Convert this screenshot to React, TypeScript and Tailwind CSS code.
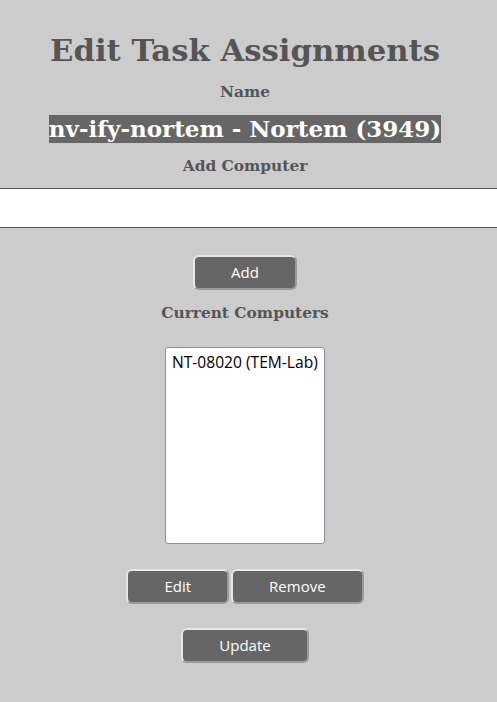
const serif = "font-['DejaVu_Serif',serif]"
const sans = "font-['Open_Sans','Noto_Sans',sans-serif]"

function GrayButton({ label }: { label: string }) {
  return (
    <button
      className={`${sans} h-[35px] px-[36px] rounded-[6px] bg-[#666666] text-white text-[15px] border-2 border-t-[#e6e6e6] border-l-[#e6e6e6] border-b-[#9a9a9a] border-r-[#9a9a9a]`}
    >
      {label}
    </button>
  )
}

export default function App() {
  return (
    <div className="min-h-[702px] bg-[#cccccc] text-[#555555] pb-10">
      <div className="flex flex-col items-center pr-[7px]">
        <h1 className={`${serif} mt-[30px] text-[30.7px] leading-[40px] font-bold`}>Edit Task Assignments</h1>
        <div className={`${serif} mt-[12px] text-[15.4px] leading-[20px] font-bold`}>Name</div>
        <div className={`${serif} mt-[13px] text-[23px] leading-[28px] font-bold`}>
          <span className="inline-block bg-[#666666] text-white leading-[28px]">nv-ify-nortem - Nortem (3949)</span>
        </div>
        <div className={`${serif} mt-[13px] text-[15.4px] leading-[20px] font-bold`}>Add Computer</div>
      </div>

      <input
        type="text"
        className="mt-[12px] block w-full h-[40px] bg-white border-y border-[#555555] outline-none px-2"
      />

      <div className="flex flex-col items-center pr-[7px]">
        <div className="mt-[27px]">
          <GrayButton label="Add" />
        </div>
        <div className={`${serif} mt-[13px] text-[15.4px] leading-[20px] font-bold`}>Current Computers</div>

        <div
          className={`${sans} mt-[24px] w-[160px] h-[197px] bg-white border border-[#8f8f9d] rounded-[3px] text-black text-[15.6px] leading-[20px] whitespace-nowrap overflow-hidden px-[6px] pt-[4px]`}
        >
          NT-08020 (TEM-Lab)
        </div>

        <div className="mt-[25px] flex gap-[2px]">
          <GrayButton label="Edit" />
          <GrayButton label="Remove" />
        </div>

        <div className="mt-[24px]">
          <GrayButton label="Update" />
        </div>
      </div>
    </div>
  )
}
